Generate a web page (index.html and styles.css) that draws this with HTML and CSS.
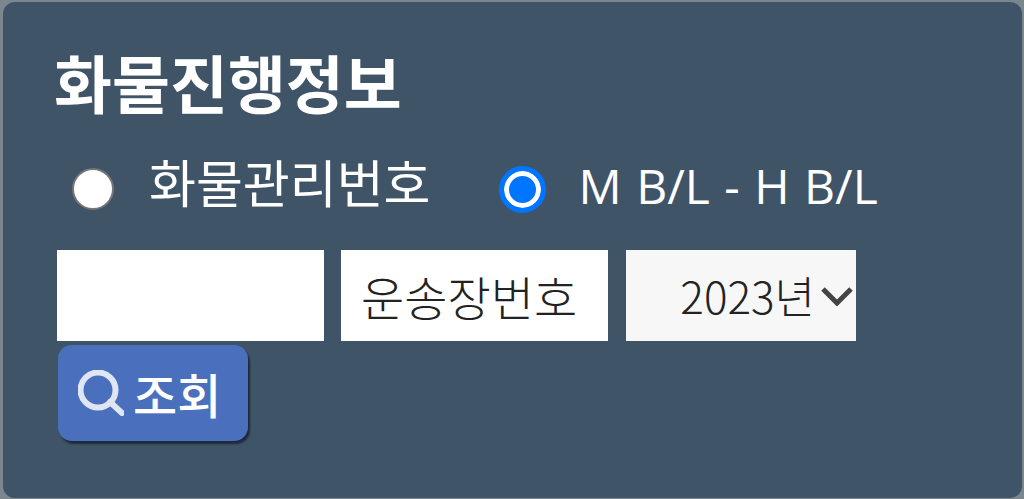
FILE: index.html
```html
<!DOCTYPE html>
<html lang="ko">

<head>
    <meta charset="UTF-8">
    <meta name="viewport" content="width=device-width, initial-scale=1.0">
    <title>화물진행정보</title>
    <link rel="stylesheet" href="styles.css">
</head>

<body>
    <div class="panel">
        <h1 class="title">화물진행정보</h1>
        <div class="radio-row">
            <label class="radio-item first">
                <span class="radio"></span>
                <span class="radio-text">화물관리번호</span>
            </label>
            <label class="radio-item second">
                <span class="radio checked"></span>
                <span class="radio-text latin">M B/L - H B/L</span>
            </label>
        </div>
        <div class="field-row">
            <div class="field"></div>
            <div class="field name">운송장번호</div>
            <div class="field year">
                <span>2023년</span>
                <svg class="chevron" viewBox="0 0 32 20">
                    <path d="M2 3 L16 17 L30 3" />
                </svg>
            </div>
        </div>
        <button class="search-btn">
            <svg class="search-icon" viewBox="0 0 46 46">
                <circle cx="20" cy="20" r="17.5" />
                <path d="M32 32 L44 43" />
            </svg>
            <span>조회</span>
        </button>
    </div>
</body>

</html>
```

FILE: styles.css
```css
html,
body {
    margin: 0;
    height: 100%;
}

body {
    background-color: #7b868f;
    font-family: "Noto Sans CJK KR", "Liberation Sans", sans-serif;
    overflow: hidden;
}

.panel {
    box-sizing: border-box;
    height: 496px;
    margin: 2px 2px 1px 3px;
    padding: 43px 0 0 54px;
    background-color: #405468;
    border-radius: 12px;
}

.title {
    margin: 0 0 0 -3px;
    font-size: 63px;
    line-height: 72px;
    font-weight: 700;
    color: #fff;
}

.radio-row {
    display: flex;
    align-items: center;
    margin-top: 40px;
    height: 64px;
}

.radio-item {
    display: flex;
    align-items: center;
    color: #fff;
}

.radio-item.first {
    margin-left: 15px;
}

.radio-item.second {
    margin-left: 68px;
}

.radio {
    box-sizing: border-box;
    width: 42px;
    height: 42px;
    margin-right: 35px;
    border-radius: 50%;
    background-color: #fff;
    border: 2px solid #767676;
}

.radio.checked {
    width: 47px;
    height: 47px;
    margin-right: 33px;
    background-color: #0075ff;
    border: 5px solid #0075ff;
    box-shadow: inset 0 0 0 5px #fff;
}

.radio-text {
    font-size: 51px;
    line-height: 60px;
    font-weight: 400;
    position: relative;
    top: -8px;
}

.radio-text.latin {
    font-family: "Open Sans", "Liberation Sans", sans-serif;
    font-size: 48px;
    word-spacing: 2px;
    top: -3px;
}

.field-row {
    display: flex;
    gap: 17px;
    margin-top: 29px;
}

.field {
    box-sizing: border-box;
    width: 267px;
    height: 91px;
    padding-left: 20px;
    background-color: #fff;
    color: #222;
    font-size: 44px;
    font-weight: 300;
    line-height: 91px;
}

.field.name {
    font-size: 47px;
}

.field.year {
    display: flex;
    align-items: center;
    justify-content: flex-end;
    gap: 6px;
    width: 230px;
    margin-left: 1px;
    padding: 0 3px 0 0;
    background-color: #f7f7f7;
}

.chevron {
    width: 32px;
    height: 20px;
    fill: none;
    stroke: #444;
    stroke-width: 5;
}

.search-btn {
    display: flex;
    align-items: center;
    gap: 9px;
    box-sizing: border-box;
    width: 190px;
    height: 96px;
    margin-top: 4px;
    margin-left: 1px;
    padding: 0 0 0 20px;
    border: none;
    border-radius: 14px;
    background-color: #4a70bd;
    box-shadow: 2px 3px 2px #1c2b3c;
    color: #fff;
    font-family: inherit;
    font-size: 48px;
    font-weight: 500;
}

.search-icon {
    width: 46px;
    height: 46px;
    fill: none;
    stroke: #dfe5f2;
    stroke-width: 6;
    stroke-linecap: round;
}
```
